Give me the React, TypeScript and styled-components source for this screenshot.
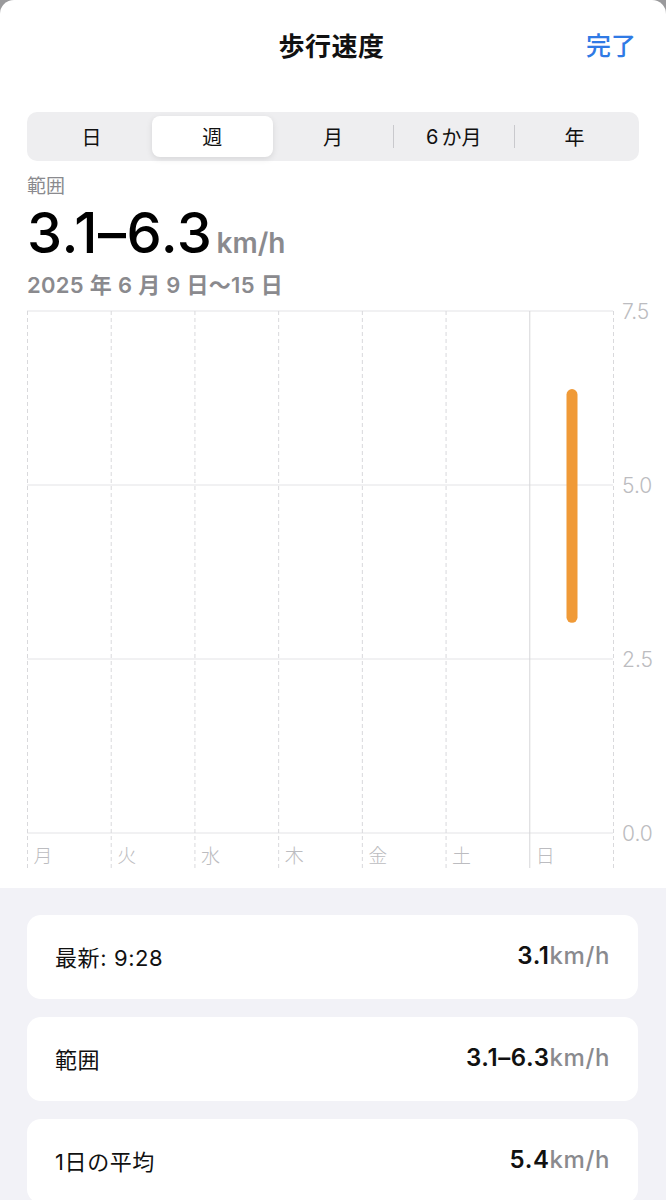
import React from "react";
import styled, { createGlobalStyle } from "styled-components";

const Global = createGlobalStyle`
  html, body { margin: 0; padding: 0; background: #9a9a9c; }
  body { font-family: Inter, "Noto Sans CJK JP", sans-serif; -webkit-font-smoothing: antialiased; }
  * { box-sizing: border-box; }
`;

const Sheet = styled.div`
  width: 666px;
  min-height: 1200px;
  background: #ffffff;
  border-radius: 14px 14px 0 0;
  overflow: hidden;
  display: flex;
  flex-direction: column;
`;

const Header = styled.header`
  height: 92px;
  display: grid;
  grid-template-columns: 1fr auto 1fr;
  align-items: center;
  padding: 0 30px 4px 27px;
`;

const Title = styled.h1`
  grid-column: 2;
  margin: 0;
  font-family: "Noto Sans CJK JP", sans-serif;
  font-size: 26px;
  font-weight: 700;
  color: #111;
  letter-spacing: 0.5px;
`;

const Done = styled.button`
  grid-column: 3;
  justify-self: end;
  border: 0;
  background: none;
  padding: 0;
  font-family: "Noto Sans CJK JP", sans-serif;
  font-size: 25px;
  font-weight: 500;
  color: #2f7ae5;
`;

const Top = styled.section`
  padding: 20px 27px 0 27px;
`;

const Segmented = styled.div`
  height: 49px;
  background: #eeeef0;
  border-radius: 10px;
  display: grid;
  grid-template-columns: repeat(5, 1fr);
  align-items: center;
  padding: 4px;
`;

const Segment = styled.div<{ $active?: boolean; $divider?: boolean }>`
  height: 41px;
  display: flex;
  align-items: center;
  justify-content: center;
  font-family: "Noto Sans CJK JP", sans-serif;
  font-size: 20px;
  color: #111;
  border-radius: 8px;
  background: ${(p) => (p.$active ? "#ffffff" : "transparent")};
  box-shadow: ${(p) => (p.$active ? "0 2px 6px rgba(0,0,0,0.10)" : "none")};
  position: relative;
  &::before {
    content: "";
    display: ${(p) => (p.$divider ? "block" : "none")};
    position: absolute;
    left: 0;
    top: 9px;
    bottom: 9px;
    width: 1px;
    background: #c9c9cd;
  }
`;

const SegNum = styled.span`
  font-family: Inter, sans-serif;
  margin-right: 3px;
`;

const RangeLabel = styled.div`
  margin-top: 13px;
  font-family: "Noto Sans CJK JP", sans-serif;
  font-size: 19px;
  line-height: 22px;
  color: #8a8a8e;
`;

const BigValue = styled.div`
  display: flex;
  align-items: baseline;
  height: 56px;
  margin-top: 9px;
`;

const BigNumber = styled.span`
  font-family: Inter, sans-serif;
  font-size: 56px;
  line-height: 56px;
  font-weight: 500;
  color: #000;
  letter-spacing: 0.6px;
`;

const BigUnit = styled.span`
  font-family: Inter, sans-serif;
  font-size: 28px;
  line-height: 28px;
  font-weight: 600;
  color: #8a8a8e;
  margin-left: 4px;
`;

const DateLine = styled.div`
  margin-top: 10px;
  font-family: Inter, "Noto Sans CJK JP", sans-serif;
  font-size: 22px;
  font-weight: 600;
  line-height: 28px;
  color: #8a8a8e;
  letter-spacing: 0.3px;
`;

const ChartWrap = styled.div`
  margin-top: 1px;
  padding-left: 27px;
  height: 588px;
`;

const Bottom = styled.section`
  flex: 1;
  background: #f2f2f7;
  padding: 27px 28px 0 27px;
  display: flex;
  flex-direction: column;
  gap: 18px;
`;

const Card = styled.div`
  height: 84px;
  background: #ffffff;
  border-radius: 14px;
  display: flex;
  align-items: center;
  justify-content: space-between;
  padding: 0 28px 3px 28px;
`;

const CardLabel = styled.span`
  font-family: Inter, "Noto Sans CJK JP", sans-serif;
  font-size: 22px;
  letter-spacing: 0.6px;
  color: #111;
`;

const CardValue = styled.span`
  font-family: Inter, sans-serif;
  font-size: 24px;
  font-weight: 600;
  color: #111;
  letter-spacing: 0.6px;
`;

const CardUnit = styled.span`
  color: #8a8a8e;
  font-weight: 500;
`;

const days = ["月", "火", "水", "木", "金", "土", "日"];

function Chart() {
  const W = 586;
  const col = W / 7;
  const yTop = 11;
  const yBottom = 533;
  const h = yBottom - yTop;
  const yOf = (v: number) => yBottom - (v / 7.5) * h;
  const xs = Array.from({ length: 8 }, (_, i) => i * col + 0.5);
  return (
    <svg width={639} height={588} viewBox="0 0 639 588">
      {[7.5, 5.0, 2.5, 0].map((v) => (
        <line key={v} x1={0} x2={W} y1={yOf(v)} y2={yOf(v)} stroke="#e3e3e6" strokeWidth={1} />
      ))}
      {xs.map((x, i) =>
        i === 6 ? (
          <line key={i} x1={x} x2={x} y1={yTop} y2={568} stroke="#d6d6d9" strokeWidth={1} />
        ) : (
          <line key={i} x1={x} x2={x} y1={yTop} y2={568} stroke="#d9d9dc" strokeWidth={1} strokeDasharray="4 3" />
        )
      )}
      {[7.5, 5.0, 2.5, 0].map((v) => (
        <text key={v} x={595} y={yOf(v) + 8} fontFamily="Inter, sans-serif" fontSize={21} fontWeight={300} fill="#bcbcc0">
          {v.toFixed(1)}
        </text>
      ))}
      {days.map((d, i) => (
        <text key={d} x={xs[i] + 6} y={563} fontFamily='"Noto Sans CJK JP", sans-serif' fontSize={19} fontWeight={300} fill="#bcbcc0">
          {d}
        </text>
      ))}
      <line x1={545} x2={545} y1={yOf(6.3)} y2={yOf(3.1)} stroke="#f09a37" strokeWidth={11} strokeLinecap="round" />
    </svg>
  );
}

export default function App() {
  return (
    <>
      <Global />
      <Sheet>
        <Header>
          <Title>歩行速度</Title>
          <Done>完了</Done>
        </Header>
        <Top>
          <Segmented>
            <Segment>日</Segment>
            <Segment $active>週</Segment>
            <Segment>月</Segment>
            <Segment $divider>
              <SegNum>6</SegNum>か月
            </Segment>
            <Segment $divider>年</Segment>
          </Segmented>
          <RangeLabel>範囲</RangeLabel>
          <BigValue>
            <BigNumber>3.1–6.3</BigNumber>
            <BigUnit>km/h</BigUnit>
          </BigValue>
          <DateLine>2025 年 6 月 9 日〜15 日</DateLine>
        </Top>
        <ChartWrap>
          <Chart />
        </ChartWrap>
        <Bottom>
          <Card>
            <CardLabel>最新: 9:28</CardLabel>
            <CardValue>
              3.1<CardUnit>km/h</CardUnit>
            </CardValue>
          </Card>
          <Card>
            <CardLabel>範囲</CardLabel>
            <CardValue>
              3.1–6.3<CardUnit>km/h</CardUnit>
            </CardValue>
          </Card>
          <Card>
            <CardLabel>1日の平均</CardLabel>
            <CardValue>
              5.4<CardUnit>km/h</CardUnit>
            </CardValue>
          </Card>
        </Bottom>
      </Sheet>
    </>
  );
}
